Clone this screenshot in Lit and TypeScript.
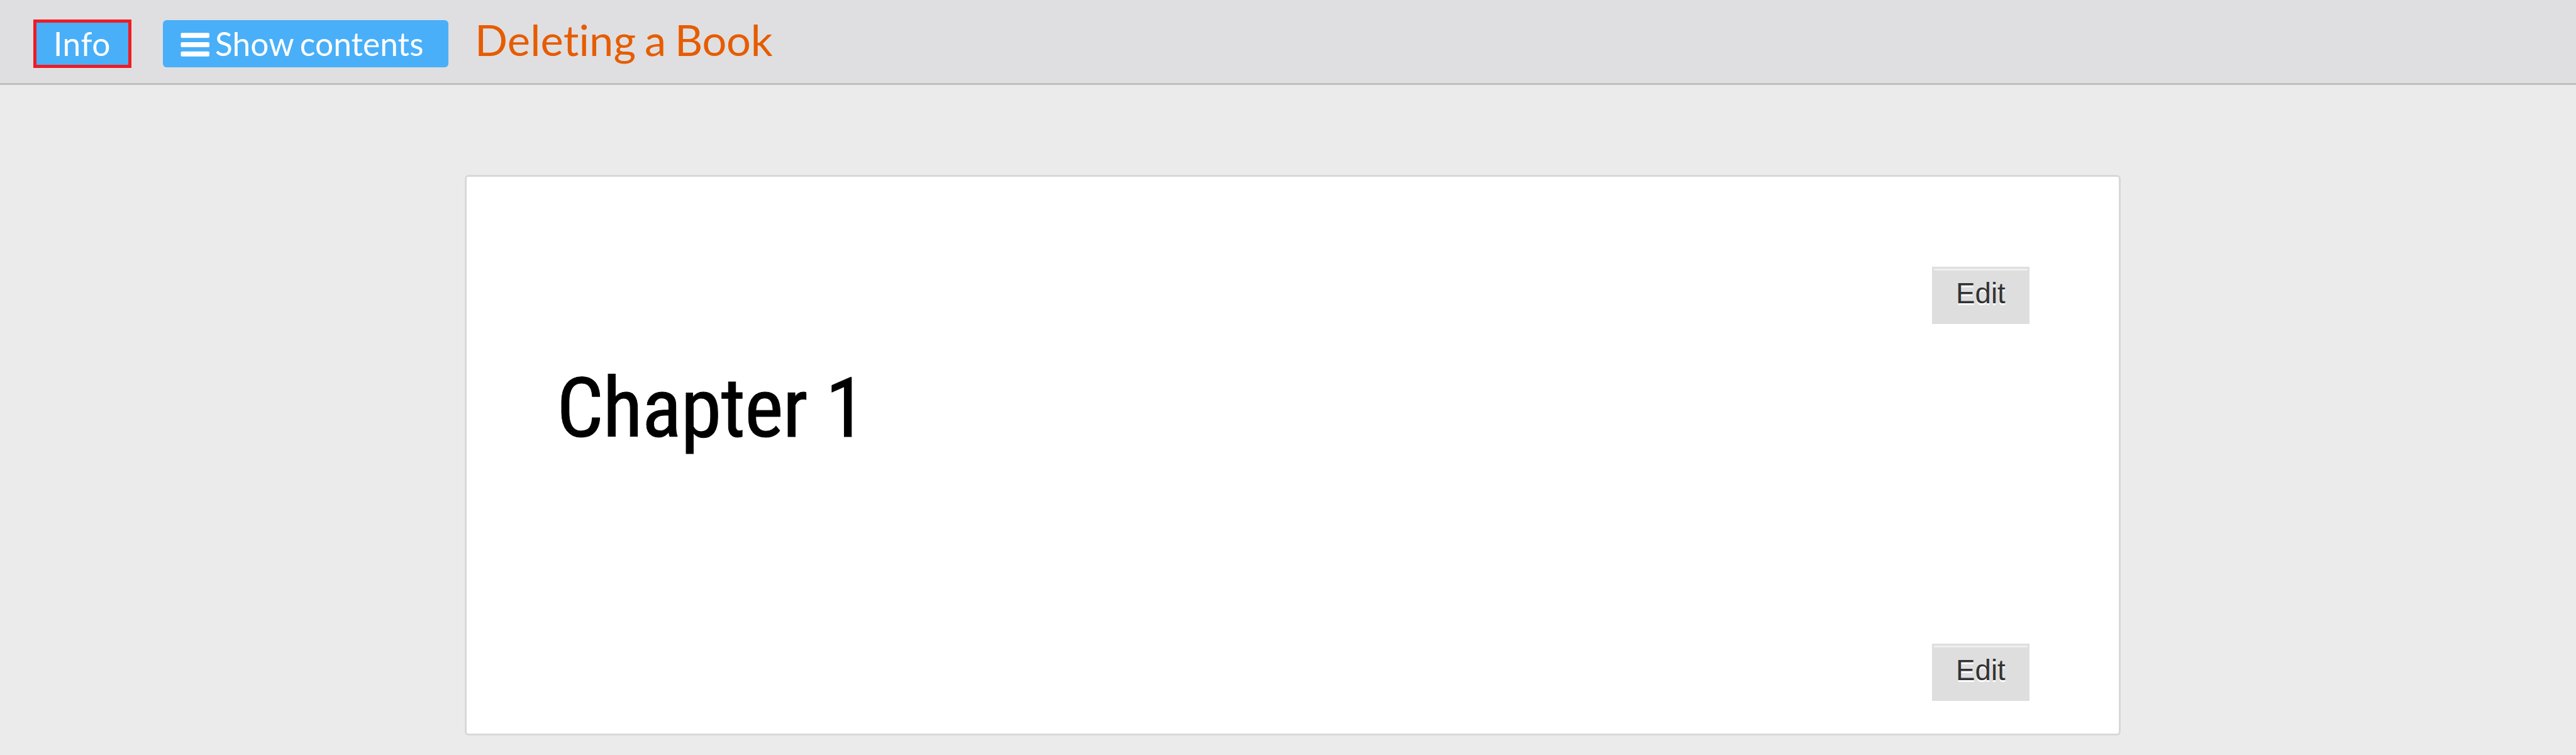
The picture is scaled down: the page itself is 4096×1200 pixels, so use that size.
import { LitElement, html, css } from "lit";
import { customElement } from "lit/decorators.js";

@customElement("app-root")
export class AppRoot extends LitElement {
  static styles = css`
    :host {
      display: block;
      height: 1200px;
      overflow: hidden;
      background: #ebebeb;
      font-family: Lato, "Liberation Sans", sans-serif;
    }
    * {
      box-sizing: border-box;
    }
    .bar {
      display: flex;
      align-items: flex-start;
      height: 135px;
      padding-left: 53px;
      background: #dfdfe1;
      border-bottom: 3px solid #bfbfbf;
    }
    .btn {
      display: flex;
      flex: none;
      background: #49aff8;
      color: #fff;
      font-size: 51.4px;
      line-height: 64px;
      white-space: nowrap;
    }
    .info {
      width: 156px;
      height: 77px;
      margin-top: 31px;
      padding: 1px 0 0 27px;
      border: 5px solid #ee1c24;
      letter-spacing: 0.6px;
    }
    .toc {
      width: 454px;
      height: 75px;
      margin: 32px 0 0 50px;
      padding: 5px 0 0 28px;
      border-radius: 6px;
      letter-spacing: 0.1px;
      word-spacing: -3.1px;
    }
    .burger {
      flex: none;
      width: 46px;
      height: 38px;
      margin: 15px 9px 0 0;
    }
    .title {
      margin: 21px 0 0 42px;
      color: #e65c00;
      font-size: 68.6px;
      font-weight: 400;
      font-variant-ligatures: none;
      letter-spacing: 0.15px;
      line-height: 83px;
      white-space: nowrap;
      word-spacing: -4px;
    }
    .tight {
      letter-spacing: -0.3px;
    }
    .card {
      display: flex;
      flex-direction: column;
      align-items: flex-end;
      width: 2633px;
      height: 891px;
      margin: 143px 0 0 739px;
      padding: 143px 142px 0 143px;
      background: #fff;
      border: 3px solid #d8d8d8;
      border-radius: 6px;
    }
    .edit {
      flex: none;
      width: 155px;
      height: 91px;
      padding: 0 0 0 35px;
      border: 3px solid #dedede;
      background: #dedede;
      box-shadow: inset 0 3px 0 #efefef;
      color: #333;
      font: 45.7px/80px "Liberation Sans", Arial, sans-serif;
      text-align: left;
      text-shadow: 0 3px 0 #fff;
    }
    .chapter {
      align-self: flex-start;
      height: 160px;
      margin: 54px 0 294px;
      color: #000;
      font: 400 131.4px/160px "Roboto Condensed", Roboto, sans-serif;
      font-stretch: 75%;
      letter-spacing: -1.1px;
      -webkit-text-stroke: 1px #000;
      white-space: nowrap;
    }
  `;

  render() {
    return html`
      <header class="bar">
        <div class="btn info">Info</div>
        <div class="btn toc">
          <svg class="burger" viewBox="0 0 46 38" fill="#fff">
            <rect x="0.5" y="0.3" width="45.5" height="8" rx="2" />
            <rect x="0.5" y="15" width="45.5" height="8" rx="2" />
            <rect x="0.5" y="29.8" width="45.5" height="8" rx="2" />
          </svg>
          <span>Show contents</span>
        </div>
        <h1 class="title">Deleting a <span class="tight">Book</span></h1>
      </header>
      <main class="card">
        <div class="edit">Edit</div>
        <h2 class="chapter">Chapter 1</h2>
        <div class="edit">Edit</div>
      </main>
    `;
  }
}
